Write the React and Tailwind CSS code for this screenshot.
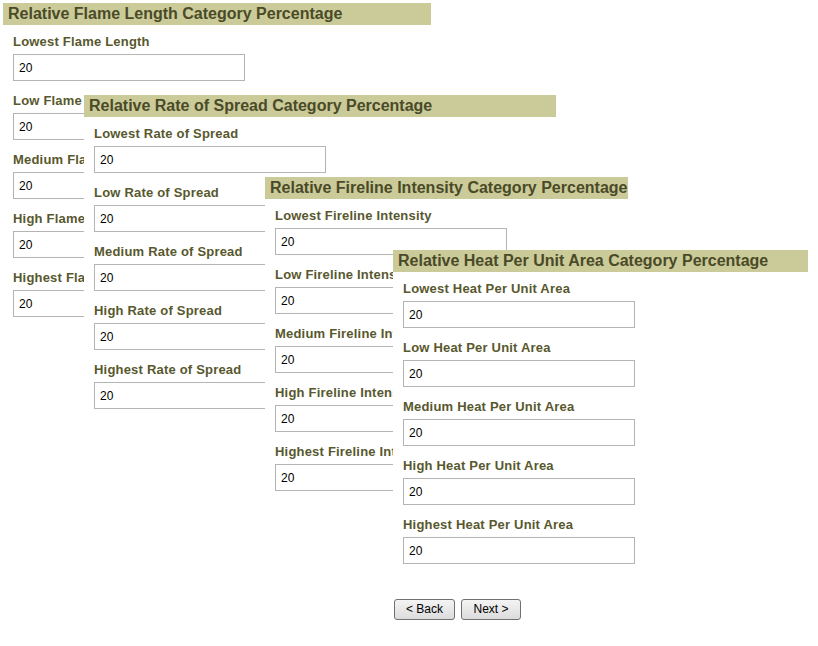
import React from 'react';

const panels = [
  { title: 'Relative Flame Length Category Percentage', noun: 'Flame Length', pos: 'left-[3px] top-[3px] w-[428px]' },
  { title: 'Relative Rate of Spread Category Percentage', noun: 'Rate of Spread', pos: 'left-[84px] top-[95px] w-[472px]' },
  { title: 'Relative Fireline Intensity Category Percentage', noun: 'Fireline Intensity', pos: 'left-[265px] top-[177px] w-[363px]' },
  { title: 'Relative Heat Per Unit Area Category Percentage', noun: 'Heat Per Unit Area', pos: 'left-[393px] top-[250px] w-[415px]' },
];

const levels = ['Lowest', 'Low', 'Medium', 'High', 'Highest'];

const Panel = ({ title, noun, pos }) => (
  <div className={`absolute bg-white pb-[10px] ${pos}`}>
    <div className="h-[22px] bg-[#cbcb99] pl-[5px] text-[16px] leading-[22px] font-bold text-[#4a4a28] whitespace-nowrap">
      {title}
    </div>
    <div className="pl-[10px]">
      {levels.map((lvl, i) => (
        <div key={lvl} className={i === 0 ? 'mt-[8px]' : 'mt-[11px]'}>
          <div className="h-[18px] leading-[18px] text-[13px] tracking-[0.2px] font-bold text-[#58582e] whitespace-nowrap">
            {lvl} {noun}
          </div>
          <input
            type="text"
            defaultValue="20"
            className="mt-[3px] block h-[27px] w-[232px] border border-[#b4b4b4] bg-white px-[5px] text-[12px] text-black outline-none"
          />
        </div>
      ))}
    </div>
  </div>
);

const App = () => {
  return (
    <div className="w-[818px] h-[646px] bg-white font-['Liberation_Sans',Arial,sans-serif]">
      <div className="relative h-[599px]">
        {panels.map((p) => (
          <Panel key={p.title} {...p} />
        ))}
      </div>
      <div className="flex gap-[6px] pl-[394px]">
        <button className="h-[21px] w-[61px] rounded-[3px] border border-[#707070] bg-gradient-to-b from-[#f4f4f4] to-[#dcdcdc] text-[12px] leading-[19px] text-black">
          &lt; Back
        </button>
        <button className="h-[21px] w-[60px] rounded-[3px] border border-[#707070] bg-gradient-to-b from-[#f4f4f4] to-[#dcdcdc] text-[12px] leading-[19px] text-black">
          Next &gt;
        </button>
      </div>
    </div>
  );
};

export default App;
